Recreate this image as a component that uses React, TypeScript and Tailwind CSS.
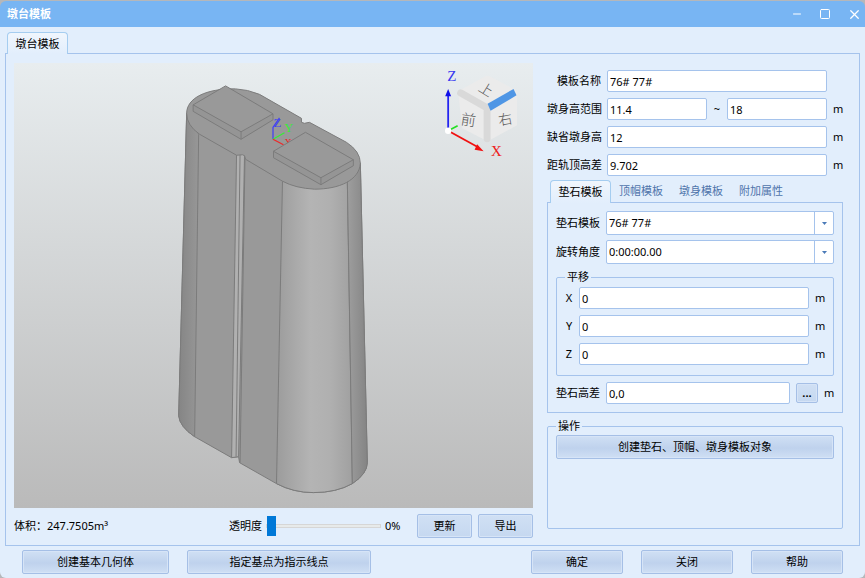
import React from 'react';
import { Minus, Square, X } from 'lucide-react';

const INPUT =
  'h-[22px] min-w-0 rounded-xs border border-[#a5c3ec] bg-white px-0.5 text-[11px] text-black outline-none focus:border-[#5b9be0]';

const BUTTON =
  'rounded-xs border border-[#a5bfe6] bg-linear-to-b from-[#d0e0f4] from-0% via-[#bfd2ed] via-55% to-[#cfdff4] to-100% text-center text-black shadow-[inset_0_0_0_1px_#d6e4f7] hover:brightness-105';

const SMALL_BUTTON =
  'rounded-xs border border-[#a5bfe6] bg-linear-to-b from-[#d0e0f4] to-[#c5d8f0] text-center text-black shadow-[inset_0_0_0_1px_#d6e4f7] hover:brightness-105';

const INNER_TABS = ['垫石模板', '顶帽模板', '墩身模板', '附加属性'];

const OFFSETS = ['X', 'Y', 'Z'];

type ButtonProps = React.ButtonHTMLAttributes<HTMLButtonElement> & { small?: boolean };

const Button: React.FC<ButtonProps> = ({ className = '', small, children, ...rest }) => (
  <button type="button" className={`${small ? SMALL_BUTTON : BUTTON} ${className}`} {...rest}>
    {children}
  </button>
);

const TitleBar: React.FC = () => (
  <header className="flex h-[26px] items-center justify-between rounded-t-md bg-[#78b5f3] px-[7px] text-white">
    <h1 className="font-bold">墩台模板</h1>
    <div className="flex items-center gap-4">
      <button type="button" aria-label="最小化">
        <Minus size={12} strokeWidth={2} />
      </button>
      <button type="button" aria-label="最大化">
        <Square size={12} strokeWidth={2} />
      </button>
      <button type="button" aria-label="关闭窗口" className="-mr-1">
        <X size={15} strokeWidth={2} />
      </button>
    </div>
  </header>
);

const PierModel: React.FC = () => (
  <g stroke="#7b7b7b" strokeWidth="1" strokeLinejoin="round">
    {/* body */}
    <path
      d="M187 113 L179 416 Q180 427 195 437 L232 458 L239 457 L240 463 L277 484 Q294 493 314 493 Q337 493 353 484 Q368 474 368 463 L361 163 Z"
      fill="#999999"
    />
    <path d="M187 113 L179 416 Q180 427 195 437 L199 134 Z" fill="url(#leftRound)" />
    <path d="M283 181 L277 484 Q294 493 314 493 Q337 493 353 484 L348 181 Z" fill="url(#frontRound)" />
    <path d="M348 181 L353 484 Q368 474 368 463 L361 163 Z" fill="url(#rightRound)" />

    {/* groove */}
    <path d="M237 153 L232 458 L239 457 L245 153 Z" fill="#b0b0b0" />
    <path d="M240.5 153 L236.5 457" fill="none" />
    <path d="M245.5 153 L240.5 463" fill="none" />

    {/* cap */}
    <path
      d="M187 113 C187 98 206 88 236 88.5 Q248 89 260 94 L302 118 L302 122 L305 123 L310 122 L347 142 Q361 151 361 163 C360 180 340 189 315 189 Q296 188 283 181 L246 159 L245 155.5 L243 154.5 L237 155 L200 134 Q187 125 187 113 Z"
      fill="#999999"
    />

    {/* back bearing stone */}
    <path d="M193.5 104.5 L193.5 111 L241.5 139 L273.5 119.5 L273.5 113.5 Z" fill="#959595" />
    <path d="M193.5 104.5 L226 85.5 L273.5 113.5 L241.5 131.5 Z" fill="#999999" />
    <path d="M241.5 131.5 L241.5 139" />

    {/* local axes */}
    <g fill="none" strokeWidth="1.3">
      <path d="M273.5 139 L273.5 127 L280 117.5" stroke="#4545ee" />
      <path d="M273.5 139 L285 132.5" stroke="#35ee35" />
      <path d="M273.5 139 L284 144.5" stroke="#ee2828" />
    </g>
    <g className="font-['Liberation_Serif',serif]" stroke="none">
      <text x="274" y="127" fontSize="13" fill="#4545ee">Z</text>
      <text x="285" y="132" fontSize="12" fill="#35ee35">Y</text>
      <text x="285" y="146" fontSize="10" fill="#ee2828">X</text>
    </g>

    {/* front bearing stone */}
    <path d="M274 151 L274 157.5 L321.5 184.5 L354 165.5 L354 159.5 Z" fill="#959595" />
    <path d="M274 151 L306 132 L354 159.5 L321.5 177.5 Z" fill="#999999" />
    <path d="M321.5 177.5 L321.5 184.5" />
  </g>
);

const ViewCube: React.FC = () => (
  <g>
    <path d="M459 91 L485 76.5 Q488.5 74.5 492 76.5 L517 90 L518 93 L518 125 L488.5 141 L463 128 Z" fill="#ebebeb" />
    <path
      d="M461.5 92.5 L488 107.5 L488 138.5"
      fill="none"
      stroke="#d9d9d9"
      strokeWidth="7"
      strokeLinejoin="round"
      strokeLinecap="round"
    />
    <path d="M488.5 103.5 L514.5 88.5 L517.5 95 L491.5 110.5 Z" fill="#4f96e5" />
    <g className="font-['Noto_Sans_CJK_SC',sans-serif]" fill="#555555" fontWeight="300">
      <text x="462" y="125" fontSize="15" transform="rotate(8 469 119)">前</text>
      <text x="499" y="124" fontSize="14" transform="rotate(-10 506 118)">右</text>
      <text x="480" y="94" fontSize="14" transform="rotate(32 487 89)">上</text>
    </g>
    <path d="M449 130 L449 94" stroke="#2424f0" strokeWidth="1.8" />
    <path d="M449 88.5 L446 96 L452 96 Z" fill="#1010e8" />
    <path d="M449 130.5 L458.5 125.5" stroke="#22e022" strokeWidth="1.6" />
    <path d="M449 130.5 L479 147" stroke="#f01010" strokeWidth="1.8" />
    <path d="M484.5 151 L478 144 L475.5 149.5 Z" fill="#f01010" />
    <circle cx="449" cy="130.5" r="3.2" fill="#ffffff" />
    <g className="font-['Liberation_Serif',serif]" fontSize="15">
      <text x="448" y="81" fill="#3a3af0">Z</text>
      <text x="492" y="156" fill="#ee2020">X</text>
    </g>
  </g>
);

const Viewport: React.FC = () => (
  <div className="min-h-[300px] flex-1 bg-linear-to-b from-[#e8edef] to-[#bababa]">
    <svg viewBox="14 63 520 445" className="size-full" role="img" aria-label="墩台三维视图">
      <defs>
        <linearGradient id="leftRound">
          <stop offset="0" stopColor="#858585" />
          <stop offset="1" stopColor="#979797" />
        </linearGradient>
        <linearGradient id="frontRound">
          <stop offset="0" stopColor="#9c9c9c" />
          <stop offset="0.45" stopColor="#b4b4b4" />
          <stop offset="0.7" stopColor="#b0b0b0" />
          <stop offset="1" stopColor="#a0a0a0" />
        </linearGradient>
        <linearGradient id="rightRound">
          <stop offset="0" stopColor="#9e9e9e" />
          <stop offset="1" stopColor="#848484" />
        </linearGradient>
      </defs>
      <PierModel />
      <ViewCube />
    </svg>
  </div>
);

const ViewportFooter: React.FC = () => (
  <div className="mt-1.5 flex items-center">
    <span>体积：247.7505m³</span>
    <label htmlFor="opacity" className="mr-1 ml-auto">透明度</label>
    <input
      id="opacity"
      type="range"
      min={0}
      max={100}
      defaultValue={0}
      className="h-5 w-[115px] appearance-none bg-transparent [&::-webkit-slider-runnable-track]:h-1 [&::-webkit-slider-runnable-track]:border [&::-webkit-slider-runnable-track]:border-[#d6d6d6] [&::-webkit-slider-runnable-track]:bg-[#e7eaea] [&::-webkit-slider-thumb]:-mt-[9px] [&::-webkit-slider-thumb]:h-5 [&::-webkit-slider-thumb]:w-[9px] [&::-webkit-slider-thumb]:appearance-none [&::-webkit-slider-thumb]:bg-[#0078d7]"
    />
    <output htmlFor="opacity" className="ml-1 w-8">0%</output>
    <Button small className="h-6 w-[55px]">更新</Button>
    <Button small className="ml-1.5 h-6 w-[55px]">导出</Button>
  </div>
);

const ComboBox: React.FC<{ id: string; value: string }> = ({ id, value }) => (
  <div className="relative min-w-0 flex-1">
    <select
      id={id}
      defaultValue={value}
      className="block h-6 w-full appearance-none rounded-xs border border-[#a5c3ec] bg-white pr-5 pl-0.5 text-[11px] text-black outline-none"
    >
      <option>{value}</option>
    </select>
    <span className="pointer-events-none absolute inset-y-0 right-0 flex w-5 items-center justify-center border-l border-[#a5c3ec]">
      <svg viewBox="0 0 5 3" className="h-[3px] w-[5px]">
        <path d="M0 0 H5 L2.5 3 Z" fill="#4a7ab8" />
      </svg>
    </span>
  </div>
);

const GeneralFields: React.FC = () => (
  <div className="grid grid-cols-[54px_1fr_10px] items-center gap-x-1.5 gap-y-1.5">
    <label htmlFor="name" className="text-right">模板名称</label>
    <input id="name" defaultValue="76# 77#" className={INPUT} />
    <span />

    <label htmlFor="heightMin" className="text-right whitespace-nowrap">墩身高范围</label>
    <div className="flex items-center">
      <input id="heightMin" defaultValue="11.4" className={`${INPUT} w-0 flex-1`} />
      <span className="w-5 text-center">~</span>
      <input aria-label="墩身高上限" defaultValue="18" className={`${INPUT} w-0 flex-1`} />
    </div>
    <span>m</span>

    <label htmlFor="heightDefault" className="text-right whitespace-nowrap">缺省墩身高</label>
    <input id="heightDefault" defaultValue="12" className={INPUT} />
    <span>m</span>

    <label htmlFor="railDiff" className="text-right whitespace-nowrap">距轨顶高差</label>
    <input id="railDiff" defaultValue="9.702" className={INPUT} />
    <span>m</span>
  </div>
);

const StonePanel: React.FC = () => (
  <div className="border border-[#a5c3ec] p-2">
    <div className="flex items-center gap-1.5">
      <label htmlFor="stone">垫石模板</label>
      <ComboBox id="stone" value="76# 77#" />
    </div>
    <div className="mt-[5px] flex items-center gap-1.5">
      <label htmlFor="angle">旋转角度</label>
      <ComboBox id="angle" value="0:00:00.00" />
    </div>

    <fieldset className="mt-[5px] rounded-xs border border-[#a5c3ec] px-2 pt-0.5 pb-2.5">
      <legend className="px-0.5 leading-4">平移</legend>
      <div className="flex flex-col gap-1.5">
        {OFFSETS.map((axis) => (
          <div key={axis} className="flex items-center gap-1.5">
            <label htmlFor={`offset${axis}`} className="w-2 text-center">{axis}</label>
            <input id={`offset${axis}`} defaultValue="0" className={`${INPUT} flex-1`} />
            <span className="w-2.5">m</span>
          </div>
        ))}
      </div>
    </fieldset>

    <div className="mt-1.5 flex items-center gap-1.5">
      <label htmlFor="stoneDiff">垫石高差</label>
      <input id="stoneDiff" defaultValue="0,0" className={`${INPUT} flex-1`} />
      <Button small className="h-5 w-[22px] leading-3 font-bold" aria-label="编辑垫石高差">...</Button>
      <span className="w-2.5">m</span>
    </div>
  </div>
);

const Settings: React.FC = () => (
  <section className="flex w-[296px] shrink-0 flex-col">
    <div className="pt-[7px]">
      <GeneralFields />
    </div>

    <div role="tablist" className="mt-1 flex pl-[3px]">
      {INNER_TABS.map((tab, idx) => (
        <button
          key={tab}
          type="button"
          role="tab"
          aria-selected={idx === 0}
          className={
            idx === 0
              ? 'relative z-10 -mb-px h-[23px] w-[61px] rounded-t border border-b-0 border-[#a5cdf0] bg-linear-to-b from-[#f0f6fd] to-[#e2eefc]'
              : 'h-[22px] w-[60px] text-[#4f74ab]'
          }
        >
          {tab}
        </button>
      ))}
    </div>
    <StonePanel />

    <fieldset className="mt-[5px] flex-1 rounded-xs border border-[#a5c3ec] px-2 pt-px">
      <legend className="px-0.5 leading-4">操作</legend>
      <Button className="h-6 w-full">创建垫石、顶帽、墩身模板对象</Button>
    </fieldset>
  </section>
);

const DialogButtons: React.FC = () => (
  <footer className="flex gap-[18px] px-[22px] pt-1 pb-1">
    <Button className="h-6 w-[147px]">创建基本几何体</Button>
    <Button className="h-6 w-[184px]">指定基点为指示线点</Button>
    <Button className="ml-auto h-6 w-[92px]">确定</Button>
    <Button className="h-6 w-[92px]">关闭</Button>
    <Button className="h-6 w-[92px]">帮助</Button>
  </footer>
);

export default function App() {
  return (
    <div className="flex min-h-screen flex-col bg-[#b5b7ba] pt-px font-['Noto_Sans','Noto_Sans_CJK_SC',sans-serif] text-[11px] leading-4 text-black">
      <TitleBar />
      <div className="flex flex-1 flex-col rounded-b-md bg-[#e2eefc] pt-[5px]">
        <div role="tablist" className="flex pl-[7px]">
          <button
            type="button"
            role="tab"
            aria-selected="true"
            className="relative z-10 -mb-px h-[22px] w-[61px] rounded-t border border-b-0 border-[#a5cdf0] bg-linear-to-b from-[#f0f6fd] to-[#e2eefc]"
          >
            墩台模板
          </button>
        </div>
        <main className="mx-[5px] flex flex-1 gap-3.5 border border-[#a5c3ec] pt-[9px] pr-4 pb-[7px] pl-2">
          <section className="flex min-w-0 flex-1 flex-col">
            <Viewport />
            <ViewportFooter />
          </section>
          <div className="flex pb-[9px]">
            <Settings />
          </div>
        </main>
        <DialogButtons />
      </div>
    </div>
  );
}
